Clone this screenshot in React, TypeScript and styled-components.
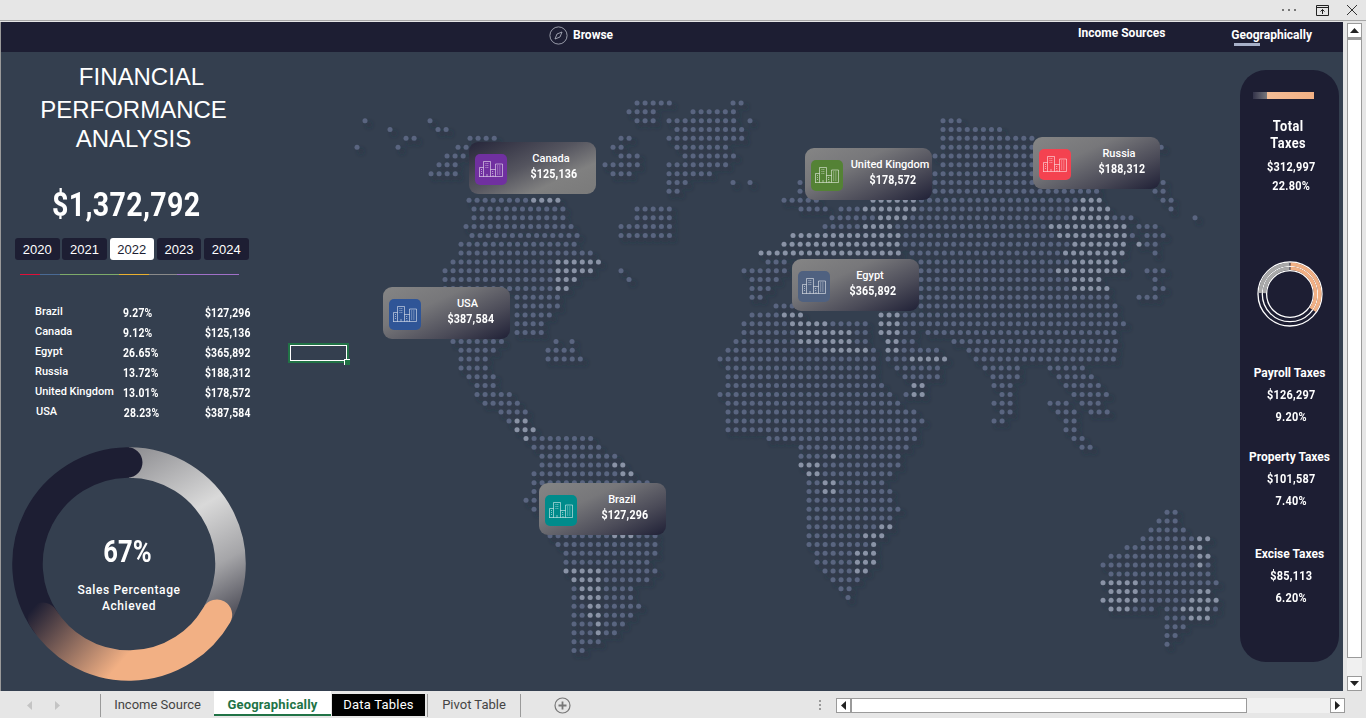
import * as React from 'react';
import styled, { createGlobalStyle, css } from 'styled-components';

const UI = "Roboto, 'Liberation Sans', sans-serif";
const NAVY = '#1d1e33';
const SLATE = '#343f4f';

// the sheet uses a narrow DIN style face, none is installed so Roboto gets squeezed
const din = (ratio: number, origin: string) => css`
  font-family: ${UI};
  font-weight: 700;
  transform: scaleX(${ratio});
  transform-origin: ${origin} center;
`;

const GlobalStyle = createGlobalStyle`
  html, body { margin: 0; padding: 0; height: 100%; overflow: hidden; background: #e6e6e6; }
  #root { height: 100%; }
`;

const Window = styled.div`
  width: 1366px;
  height: 718px;
  display: flex;
  flex-direction: column;
  background: #e6e6e6;
  font-family: ${UI};
`;

const TitleStrip = styled.div`
  height: 20px;
  flex: none;
  display: flex;
  align-items: center;
  justify-content: flex-end;
  padding-right: 8px;
  gap: 17px;
  border-bottom: 1px solid #a6a6a6;
`;

const Body = styled.div`
  flex: 1;
  min-height: 0;
  display: flex;
  padding-top: 1px;
`;

const Sheet = styled.div`
  width: 1342px;
  margin-left: 1px;
  display: flex;
  flex-direction: column;
  background: ${SLATE};
  box-shadow: -1px 0 0 #9a9a9a;
`;

const Header = styled.div`
  height: 30px;
  flex: none;
  display: flex;
  background: ${NAVY};
  color: #fff;
  font-size: 12px;
  font-weight: 700;
`;

const BrowseLink = styled.div`
  display: flex;
  align-items: center;
  gap: 5px;
  margin: 0 0 4px 548px;
`;

const IncomeLink = styled.div`
  margin: 4px 0 0 465px;
`;

const GeoLink = styled.div`
  position: relative;
  margin: 6px 0 0 66px;
  &::after {
    content: '';
    position: absolute;
    left: 3px;
    top: 15px;
    width: 26px;
    height: 3px;
    background: #a7b0c8;
  }
`;

const Content = styled.div`
  flex: 1;
  min-height: 0;
  display: flex;
`;

const LeftPanel = styled.div`
  width: 269px;
  flex: none;
  color: #fff;
`;

const Title = styled.div`
  padding-top: 11px;
  font-family: 'Liberation Sans', sans-serif;
  font-size: 24px;
  text-align: center;
`;

const TitleLine = styled.div<{ $shift: number; $height: number }>`
  height: ${(p) => p.$height}px;
  line-height: ${(p) => p.$height}px;
  width: 265px;
  margin-left: ${(p) => p.$shift}px;
`;

const Total = styled.div`
  ${din(0.84, 'left')}
  margin: 34px 0 0 51px;
  font-size: 34px;
  line-height: 42px;
  letter-spacing: 0.4px;
  white-space: nowrap;
`;

const Years = styled.div`
  display: flex;
  gap: 2.75px;
  margin: 13px 0 0 14px;
`;

const Year = styled.div<{ $active?: boolean }>`
  width: 44.5px;
  height: 22px;
  line-height: 23px;
  text-align: center;
  border-radius: 3px;
  font-family: 'Liberation Sans', sans-serif;
  font-size: 13px;
  background: ${(p) => (p.$active ? '#fff' : NAVY)};
  color: ${(p) => (p.$active ? NAVY : '#fff')};
`;

const Rainbow = styled.div`
  display: flex;
  height: 1px;
  margin: 14px 0 0 19px;
`;

const RainbowPart = styled.div<{ $w: number; $c: string }>`
  width: ${(p) => p.$w}px;
  background: ${(p) => p.$c};
`;

const SalesTable = styled.div`
  margin: 27px 0 0 34px;
  display: grid;
  grid-auto-rows: 20px;
  align-items: center;
`;

const SalesRow = styled.div`
  display: grid;
  grid-template-columns: 88px 82px auto;
`;

const Country = styled.span<{ $nudge?: boolean }>`
  font-size: 11px;
  font-weight: 500;
  white-space: nowrap;
  padding-left: ${(p) => (p.$nudge ? 1 : 0)}px;
`;

const Figure = styled.span<{ $nudge?: boolean }>`
  ${din(0.83, 'left')}
  font-size: 12.5px;
  letter-spacing: 0.2px;
  padding-left: ${(p) => (p.$nudge ? 1 : 0)}px;
`;

const DonutBox = styled.div`
  position: relative;
  width: 236px;
  height: 236px;
  margin: 24px 0 0 10px;
`;

const DonutLabel = styled.div`
  position: absolute;
  left: 0;
  right: 0;
  top: 87px;
  text-align: center;
`;

const Percent = styled.div`
  ${din(0.8, 'center')}
  font-size: 32px;
  line-height: 36px;
  margin-right: 3px;
`;

const DonutCaption = styled.div`
  margin-top: 13px;
  font-size: 12px;
  font-weight: 500;
  line-height: 16px;
  letter-spacing: 0.6px;
`;

const MapArea = styled.div`
  position: relative;
  flex: 1;
  min-width: 0;
`;

const DotsSvg = styled.svg`
  position: absolute;
  left: 0;
  top: 0;
`;

const Card = styled.div<{ $x: number; $y: number; $flip?: boolean }>`
  position: absolute;
  left: ${(p) => p.$x - 270}px;
  top: ${(p) => p.$y - 52}px;
  width: 127px;
  height: 52px;
  box-sizing: border-box;
  display: flex;
  align-items: center;
  padding-left: 6px;
  border-radius: 9px;
  background: ${(p) =>
    p.$flip
      ? 'linear-gradient(155deg, #26263a 0%, #55555f 45%, #808080 72%, #7a7a7a 100%)'
      : 'linear-gradient(155deg, #858585 0%, #77777a 35%, #4b4b58 70%, #1f2036 100%)'};
  color: #fff;
`;

const IconTile = styled.div<{ $color: string }>`
  width: 32px;
  height: 31px;
  flex: none;
  display: flex;
  align-items: center;
  justify-content: center;
  border-radius: 5px;
  background: ${(p) => p.$color};
  margin-top: 2px;
`;

const CardText = styled.div<{ $center: number }>`
  position: relative;
  left: ${(p) => p.$center - 85}px;
  width: 94px;
  flex: none;
  text-align: center;
  margin-top: -5px;
`;

const CardLabel = styled.div`
  font-size: 11px;
  font-weight: 500;
  line-height: 15px;
  white-space: nowrap;
`;

const CardValue = styled.div`
  ${din(0.82, 'center')}
  font-size: 13px;
  line-height: 15px;
  letter-spacing: 0.2px;
  padding-left: 7px;
`;

const SelectedCell = styled.div`
  position: absolute;
  left: 18px;
  top: 291px;
  width: 57px;
  height: 16px;
  border: 2px solid #217346;
  outline: 1px solid #fff;
  outline-offset: -3px;
  &::after {
    content: '';
    position: absolute;
    right: -3px;
    bottom: -4px;
    width: 5px;
    height: 5px;
    background: #217346;
    border-left: 1px solid #fff;
    border-top: 1px solid #fff;
  }
`;

const RightPanel = styled.div`
  width: 99px;
  height: 592px;
  flex: none;
  margin: 18px 4px 0 0;
  padding-top: 22px;
  box-sizing: border-box;
  border-radius: 26px;
  background: ${NAVY};
  color: #fff;
  text-align: center;
`;

const MiniBar = styled.div`
  display: flex;
  width: 61px;
  height: 7px;
  margin-left: 13px;
`;

const MiniBarFade = styled.div`
  width: 14px;
  background: linear-gradient(to right, #33334a, #77777c);
`;

const MiniBarFill = styled.div`
  flex: 1;
  background: linear-gradient(to right, #f4bd96, #f2b084);
`;

const TotalHeading = styled.div`
  ${din(0.88, 'center')}
  margin-top: 19px;
  font-size: 14.5px;
  line-height: 17px;
  letter-spacing: 0.5px;
  padding-right: 3px;
`;

const TaxValue = styled.div`
  ${din(0.84, 'center')}
  font-size: 13px;
  line-height: 19px;
  letter-spacing: 0.3px;
  padding-left: 4px;
`;

const TotalValues = styled.div`
  margin-top: 5px;
`;

const RingBox = styled.div`
  height: 66px;
  margin-top: 66px;
`;

const TaxGroup = styled.div<{ $gap: number }>`
  margin-top: ${(p) => p.$gap}px;
`;

const TaxName = styled.div`
  font-size: 12px;
  font-weight: 700;
  line-height: 22px;
  white-space: nowrap;
`;

const TaxLine = styled(TaxValue)`
  line-height: 22px;
`;

const VScroll = styled.div`
  width: 15px;
  margin: 1px 0 0 4px;
  display: flex;
  flex-direction: column;
  background: #f0f0f0;
`;

const ScrollButton = styled.div`
  width: 13px;
  height: 13px;
  flex: none;
  display: flex;
  align-items: center;
  justify-content: center;
  background: #fff;
  border: 1px solid #9a9a9a;
`;

const VThumb = styled.div`
  flex: none;
  height: 620px;
  box-sizing: border-box;
  background: #fff;
  border: 1px solid #9a9a9a;
  border-top-width: 2px;
`;

const VTrack = styled.div`
  flex: 1;
`;

const TabBar = styled.div`
  height: 27px;
  flex: none;
  display: flex;
  align-items: flex-start;
  font-size: 13px;
  color: #444;
`;

const TabArrows = styled.div`
  width: 101px;
  height: 23px;
  margin-top: 3px;
  flex: none;
  display: flex;
  align-items: center;
  gap: 21px;
  padding-left: 26px;
  box-sizing: border-box;
  border-right: 1px solid #9a9a9a;
`;

const Tab = styled.div<{ $w: number }>`
  box-sizing: border-box;
  flex: none;
  width: ${(p) => p.$w}px;
  height: 23px;
  margin-top: 3px;
  line-height: 21px;
  text-align: center;
  white-space: nowrap;
  color: #444;
`;

const ActiveTab = styled(Tab)`
  height: 25px;
  margin-top: 0;
  line-height: 27px;
  letter-spacing: 0.2px;
  background: #fff;
  color: #217346;
  font-weight: 700;
  border-bottom: 2px solid #217346;
`;

const DarkTab = styled(Tab)`
  height: 22px;
  margin-left: 1px;
  letter-spacing: 0.2px;
  background: #000;
  color: #fff;
`;

const TabDivider = styled.div<{ $gap?: number }>`
  width: 1px;
  height: 23px;
  margin: 3px 0 0 ${(p) => p.$gap ?? 0}px;
  flex: none;
  background: #9a9a9a;
`;

const AddSheet = styled.div`
  margin: 6px 0 0 33px;
  display: flex;
`;

const Grip = styled.div`
  margin: 9px 0 0 248px;
  width: 2px;
  height: 10px;
  background: repeating-linear-gradient(to bottom, #999 0 2px, transparent 2px 4px);
`;

const HScroll = styled.div`
  width: 509px;
  height: 15px;
  margin: 7px 0 0 15px;
  display: flex;
  background: #f0f0f0;
`;

const HThumb = styled.div`
  width: 396px;
  box-sizing: border-box;
  background: #fff;
  border: 1px solid #9a9a9a;
`;

const HTrack = styled.div`
  flex: 1;
`;

const STEP = 8.08;
const ROW_H = 8.83;

// k, spans, lighter spans (page pixel x positions, read off the screenshot)
const MAP_ROWS: [number, string, string?][] = [
  [0, '637-669 733-741'],
  [1, '629-653 693-733'],
  [2, '365-365 430-430 637-653 669-733 750-750 943-960'],
  [3, '390-390 438-446 677-741 943-1000'],
  [4, '406-414 470-494 621-629 669-741 943-1034'],
  [5, '357-357 398-398 458-467 613-621 677-725 943-1161'],
  [6, '447-463 621-637 685-733 935-1100'],
  [7, '439-455 605-637 669-725 943-1100'],
  [8, '431-455 613-629 669-709 935-1100'],
  [9, '669-685 733-733 750-750 800-800 935-1100 1155-1163'],
  [10, '669-677 800-800 935-1099 1155-1163'],
  [11, '469-558 784-817 873-1099 1163-1171', '533-558 873-914 1083-1099'],
  [12, '474-564 637-669 801-826 841-1107 1171-1171', '866-914 1075-1107'],
  [13, '474-564 637-669 832-1131 1195-1195', '881-906 1075-1107'],
  [14, '466-572 621-669 825-1123 1139-1155', '866-890 1051-1123'],
  [15, '472-577 621-669 793-1131 1147-1163', '793-897 1059-1123'],
  [16, '461-574 784-1123 1139-1155', '784-897 1075-1123 1139-1139'],
  [17, '461-590 761-899 912-1123 1155-1155', '761-897 1066-1123'],
  [18, '453-598 768-790 921-1115', '558-598 1075-1115'],
  [19, '445-590 621-621 744-790 921-1123 1147-1163', '558-590 1059-1123'],
  [20, '445-574 629-629 752-776 921-1099 1155-1155', '558-574 1075-1099'],
  [21, '445-567 752-769 921-1107 1155-1163', '558-567 1075-1107'],
  [22, '517-558 752-761 921-1107 1139-1155'],
  [23, '517-558 776-793 921-1115'],
  [24, '517-549 752-801 881-1115', '785-801 881-898'],
  [25, '517-541 744-866 881-1124', '793-825 881-898'],
  [26, '517-541 744-866 881-914 928-1115', '800-850 881-898'],
  [27, '453-501 556-556 572-572 736-866 888-914 954-1115', '800-850 888-898'],
  [28, '461-493 548-572 728-875 888-938 969-1115', '825-866 888-898'],
  [29, '461-485 548-580 720-875 888-947 976-1115', '912-947'],
  [30, '461-485 728-875 897-938 985-1019 1050-1083'],
  [31, '469-493 728-875 905-938 993-1019 1059-1091'],
  [32, '477-493 728-882 914-922 994-1010 1066-1099', '914-922'],
  [33, '477-509 720-890 906-922 1002-1010 1074-1107', '914-922'],
  [34, '485-517 728-898 994-1010 1050-1066 1082-1099'],
  [35, '501-525 728-914 1002-1010 1058-1074 1091-1107'],
  [36, '509-525 728-922 994-1002 1066-1074', '517-525'],
  [37, '517-534 728-914 1066-1074', '517-534'],
  [38, '526-590 769-914 1074-1082', '526-526'],
  [39, '534-598 801-906 1082-1091'],
  [40, '542-614 801-898', '833-833'],
  [41, '542-622 801-898', '614-622 801-817'],
  [42, '534-630 809-890', '622-630 809-817'],
  [43, '534-647 809-882', '825-833'],
  [44, '534-647 809-890', '825-833'],
  [45, '526-534 809-890'],
  [46, '534-534 809-898'],
  [47, '809-890'],
  [48, '809-890', '882-890'],
  [49, '550-655 809-882', '614-630 865-882'],
  [50, '558-655 809-874', '874-874'],
  [51, '566-655 817-874', '857-874'],
  [52, '566-647 817-874', '857-874'],
  [53, '566-655 825-865', '566-598 857-865'],
  [54, '574-647 833-857', '574-598'],
  [55, '574-630 841-849', '582-598'],
  [56, '574-630 848-848', '582-598'],
  [57, '574-638', '590-598'],
  [58, '574-630', '590-598'],
  [59, '574-622', '598-598'],
  [60, '574-614', '598-598'],
  [61, '574-598'],
  [62, '574-582'],
];

const AUS_ROWS: [string, string?][] = [
  ['1167-1175'],
  ['1159-1175'],
  ['1151-1183'],
  ['1143-1208', '1200-1208'],
  ['1127-1200', '1192-1200'],
  ['1111-1208', '1200-1208'],
  ['1103-1208', '1200-1200'],
  ['1111-1208'],
  ['1103-1216', '1103-1135'],
  ['1111-1208', '1111-1135 1200-1208'],
  ['1103-1216', '1103-1135 1192-1216'],
  ['1111-1151 1167-1216', '1111-1127 1184-1208'],
  ['1167-1208', '1192-1208'],
  ['1167-1183'],
  ['1167-1175'],
  ['1167-1167'],
];

function parseSpans(text?: string) {
  if (!text) return [];
  return text.split(' ').map((s) => s.split('-').map(Number));
}

function rowDots(y: number, spans: string, light?: string) {
  const hi = parseSpans(light);
  const out: { x: number; y: number; hi: boolean }[] = [];
  parseSpans(spans).forEach(([a, b]) => {
    for (let x = a; x <= b + 1.5; x += STEP) {
      out.push({ x, y, hi: hi.some(([c, d]) => x >= c - 3 && x <= d + 3) });
    }
  });
  return out;
}

const DOTS = [
  ...MAP_ROWS.flatMap(([k, spans, light]) => rowDots(103 + k * ROW_H, spans, light)),
  ...AUS_ROWS.flatMap(([spans, light], i) => rowDots(512.3 + i * 8.8, spans, light)),
];

function DotMap() {
  return (
    <DotsSvg width="970" height="639" viewBox="270 52 970 639">
      <defs>
        <filter id="dotShadow" x="-5%" y="-5%" width="110%" height="110%">
          <feDropShadow dx="4" dy="4" stdDeviation="2.4" floodColor="#232b38" floodOpacity="0.6" />
        </filter>
      </defs>
      <g filter="url(#dotShadow)">
        {DOTS.map((d, i) => (
          <circle key={i} cx={d.x} cy={d.y} r="2.5" fill={d.hi ? '#8a93a6' : '#5a6580'} />
        ))}
      </g>
    </DotsSvg>
  );
}

function Buildings() {
  return (
    <svg width="24" height="16" viewBox="0 0 24 16" fill="none" stroke="#fff" strokeOpacity="0.75" strokeWidth="0.7">
      <path d="M0.5 15.5V6.5H4.5" />
      <path d="M4.5 15.5V0.5H11.5V15.5" />
      <path d="M11.5 8.5H16.5" />
      <path d="M16.5 15.5V3H23.5V15.5H0" />
      <path
        d="M6.5 2.5H9.8M6.5 4.5H9.8M6.5 6.5H9.8M2 8.5H3.5M2 10.5H3.5M2 12.5H3.5M13 10.5H15M13 12.5H15M18 5H22M18 7H22M18 9H22M18 11H22M18 13H22"
        strokeDasharray="1 0.8"
      />
      <path d="M8 13V15.5M14 14V15.5" />
    </svg>
  );
}

function polar(cx: number, cy: number, r: number, deg: number) {
  const rad = ((deg - 90) * Math.PI) / 180;
  return [cx + r * Math.cos(rad), cy + r * Math.sin(rad)];
}

function arc(cx: number, cy: number, r: number, from: number, to: number) {
  const [x1, y1] = polar(cx, cy, r, from);
  const [x2, y2] = polar(cx, cy, r, to);
  return `M${x1} ${y1}A${r} ${r} 0 ${to - from > 180 ? 1 : 0} 1 ${x2} ${y2}`;
}

function SalesDonut() {
  const c = 118;
  const r = 101.5;
  return (
    <svg width="236" height="236" viewBox="0 0 236 236" fill="none" strokeWidth="30.5">
      <defs>
        <linearGradient id="ringGray" gradientUnits="userSpaceOnUse" x1="118" y1="0" x2="215" y2="170">
          <stop offset="0" stopColor="#8a8a8e" />
          <stop offset="0.45" stopColor="#d9d9d9" />
          <stop offset="0.75" stopColor="#a5a5a8" />
          <stop offset="1" stopColor="#54545e" />
        </linearGradient>
        <linearGradient id="ringPeach" gradientUnits="userSpaceOnUse" x1="28" y1="155" x2="105" y2="222">
          <stop offset="0" stopColor={NAVY} />
          <stop offset="1" stopColor="#f2b084" />
        </linearGradient>
      </defs>
      <path d={arc(c, c, r, 0, 128)} stroke="url(#ringGray)" />
      <path d={arc(c, c, r, 235, 359)} stroke={NAVY} strokeLinecap="round" />
      <path d={arc(c, c, r, 120, 238)} stroke="url(#ringPeach)" strokeLinecap="round" />
    </svg>
  );
}

function TaxRing() {
  const c = 33;
  return (
    <svg width="66" height="66" viewBox="0 0 66 66" fill="none">
      <circle cx={c} cy={c} r="32" stroke="#fff" strokeWidth="1.3" />
      <circle cx={c} cy={c} r="27.7" stroke="#fff" strokeWidth="1.3" />
      <circle cx={c} cy={c} r="23.4" stroke="#fff" strokeWidth="1.3" />
      <path d={arc(c, c, 29.8, 1, 125)} stroke="#f2b084" strokeWidth="3.4" />
      <path d={arc(c, c, 25.6, 1, 125)} stroke="#f2b084" strokeWidth="3.4" />
      <path d={arc(c, c, 29.8, 272, 359)} stroke="#a9a9a9" strokeWidth="3.4" />
      <path d={arc(c, c, 25.6, 272, 359)} stroke="#a9a9a9" strokeWidth="3.4" />
    </svg>
  );
}

const RAINBOW: [number, string][] = [
  [20, '#e0103a'],
  [20, '#4a6a94'],
  [59, '#7eaa6a'],
  [30, '#e8b030'],
  [28, '#8a8a8a'],
  [62, '#a070c8'],
];

const SALES = [
  ['Brazil', '9.27%', '$127,296'],
  ['Canada', '9.12%', '$125,136'],
  ['Egypt', '26.65%', '$365,892'],
  ['Russia', '13.72%', '$188,312'],
  ['United Kingdom', '13.01%', '$178,572'],
  ['USA', '28.23%', '$387,584'],
];

const CARDS = [
  { name: 'Canada', value: '$125,136', x: 469, y: 142, color: '#7030a0', center: 82, flip: true },
  { name: 'United Kingdom', value: '$178,572', x: 805, y: 148, color: '#548235', center: 85 },
  { name: 'Russia', value: '$188,312', x: 1033, y: 137, color: '#f44250', center: 86 },
  { name: 'Egypt', value: '$365,892', x: 792, y: 259, color: '#4f6180', center: 78 },
  { name: 'USA', value: '$387,584', x: 383, y: 287, color: '#2f5597', center: 84.5 },
  { name: 'Brazil', value: '$127,296', x: 539, y: 483, color: '#008b8b', center: 83 },
];

const TAXES = [
  { name: 'Payroll Taxes', value: '$126,297', share: '9.20%', gap: 35 },
  { name: 'Property Taxes', value: '$101,587', share: '7.40%', gap: 18 },
  { name: 'Excise Taxes', value: '$85,113', share: '6.20%', gap: 31 },
];

export default function App() {
  return (
    <Window>
      <GlobalStyle />
      <TitleStrip>
        <svg width="18" height="4" viewBox="0 0 18 4" fill="#777">
          <rect x="1" y="1" width="2" height="2" />
          <rect x="7" y="1" width="2" height="2" />
          <rect x="13" y="1" width="2" height="2" />
        </svg>
        <svg width="13" height="11" viewBox="0 0 13 11" fill="none" stroke="#222" strokeWidth="1">
          <path d="M.5.5h12v10H.5zM.5 2.5h12M6.5 9V4.5M4.5 6.5l2-2 2 2" />
        </svg>
        <svg width="12" height="12" viewBox="0 0 12 12" fill="none" stroke="#333" strokeWidth="1">
          <path d="M1 1l10 10M11 1L1 11" />
        </svg>
      </TitleStrip>
      <Body>
        <Sheet>
          <Header>
            <BrowseLink>
              <svg width="19" height="19" viewBox="0 0 19 19" fill="none" stroke="#b9bcc8" strokeWidth="0.8">
                <circle cx="9.5" cy="9.5" r="8.6" />
                <path d="M13 6l-2 5-5 2 2-5z" />
              </svg>
              Browse
            </BrowseLink>
            <IncomeLink>Income Sources</IncomeLink>
            <GeoLink>Geographically</GeoLink>
          </Header>
          <Content>
            <LeftPanel>
              <Title>
                <TitleLine $shift={8} $height={28}>FINANCIAL</TitleLine>
                <TitleLine $shift={0} $height={37}>PERFORMANCE</TitleLine>
                <TitleLine $shift={0} $height={21}>ANALYSIS</TitleLine>
              </Title>
              <Total>$1,372,792</Total>
              <Years>
                <Year>2020</Year>
                <Year>2021</Year>
                <Year $active>2022</Year>
                <Year>2023</Year>
                <Year>2024</Year>
              </Years>
              <Rainbow>
                {RAINBOW.map(([w, c]) => (
                  <RainbowPart key={c} $w={w} $c={c} />
                ))}
              </Rainbow>
              <SalesTable>
                {SALES.map(([name, share, value]) => (
                  <SalesRow key={name}>
                    <Country $nudge={name === 'USA'}>{name}</Country>
                    <Figure $nudge={name === 'USA'}>{share}</Figure>
                    <Figure>{value}</Figure>
                  </SalesRow>
                ))}
              </SalesTable>
              <DonutBox>
                <SalesDonut />
                <DonutLabel>
                  <Percent>67%</Percent>
                  <DonutCaption>
                    Sales Percentage
                    <br />
                    Achieved
                  </DonutCaption>
                </DonutLabel>
              </DonutBox>
            </LeftPanel>
            <MapArea>
              <DotMap />
              {CARDS.map((c) => (
                <Card key={c.name} $x={c.x} $y={c.y} $flip={c.flip}>
                  <IconTile $color={c.color}>
                    <Buildings />
                  </IconTile>
                  <CardText $center={c.center}>
                    <CardLabel>{c.name}</CardLabel>
                    <CardValue>{c.value}</CardValue>
                  </CardText>
                </Card>
              ))}
              <SelectedCell />
            </MapArea>
            <RightPanel>
              <MiniBar>
                <MiniBarFade />
                <MiniBarFill />
              </MiniBar>
              <TotalHeading>
                Total
                <br />
                Taxes
              </TotalHeading>
              <TotalValues>
                <TaxValue>$312,997</TaxValue>
                <TaxValue>22.80%</TaxValue>
              </TotalValues>
              <RingBox>
                <TaxRing />
              </RingBox>
              {TAXES.map((t) => (
                <TaxGroup key={t.name} $gap={t.gap}>
                  <TaxName>{t.name}</TaxName>
                  <TaxLine>{t.value}</TaxLine>
                  <TaxLine>{t.share}</TaxLine>
                </TaxGroup>
              ))}
            </RightPanel>
          </Content>
        </Sheet>
        <VScroll>
          <ScrollButton>
            <svg width="9" height="5" viewBox="0 0 9 5"><path d="M4.5 0L9 5H0z" fill="#222" /></svg>
          </ScrollButton>
          <VThumb />
          <VTrack />
          <ScrollButton>
            <svg width="9" height="5" viewBox="0 0 9 5"><path d="M4.5 5L9 0H0z" fill="#222" /></svg>
          </ScrollButton>
        </VScroll>
      </Body>
      <TabBar>
        <TabArrows>
          <svg width="7" height="9" viewBox="0 0 7 9"><path d="M6 0v9L1 4.5z" fill="#c4c4c4" /></svg>
          <svg width="7" height="9" viewBox="0 0 7 9"><path d="M1 0v9l5-4.5z" fill="#c4c4c4" /></svg>
        </TabArrows>
        <Tab $w={113}>Income Source</Tab>
        <ActiveTab $w={117}>Geographically</ActiveTab>
        <DarkTab $w={93}>Data Tables</DarkTab>
        <TabDivider $gap={2} />
        <Tab $w={92}>Pivot Table</Tab>
        <TabDivider />
        <AddSheet>
          <svg width="17" height="17" viewBox="0 0 17 17" fill="none" stroke="#777">
            <circle cx="8.5" cy="8.5" r="7.5" strokeWidth="1.2" />
            <path d="M8.5 4.5v8M4.5 8.5h8" strokeWidth="1.8" />
          </svg>
        </AddSheet>
        <Grip />
        <HScroll>
          <ScrollButton>
            <svg width="5" height="9" viewBox="0 0 5 9"><path d="M0 4.5L5 0v9z" fill="#222" /></svg>
          </ScrollButton>
          <HThumb />
          <HTrack />
          <ScrollButton>
            <svg width="5" height="9" viewBox="0 0 5 9"><path d="M5 4.5L0 0v9z" fill="#222" /></svg>
          </ScrollButton>
        </HScroll>
      </TabBar>
    </Window>
  );
}
